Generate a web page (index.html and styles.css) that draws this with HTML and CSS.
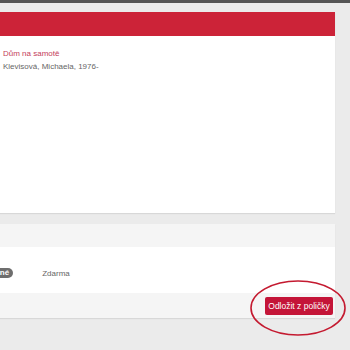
FILE: index.html
```html
<!DOCTYPE html>
<html lang="cs">
<head>
<meta charset="UTF-8"/>
<title>Moje police</title>
<link rel="stylesheet" href="styles.css">
</head>
<body>
<div class="topbar"></div>
<div class="page">
  <section class="panel">
    <div class="panel-head"></div>
    <div class="panel-body">
      <a class="book-title" href="#">Dům na samotě</a>
      <div class="book-author">Klevisová, Michaela, 1976-</div>
    </div>
  </section>

  <section class="panel loan">
    <div class="loan-head"></div>
    <div class="loan-row">
      <span class="badge">Volné</span>
      <span class="price">Zdarma</span>
    </div>
    <div class="loan-foot">
      <button class="btn-remove">Odložit z poličky</button>
      <svg class="circle" width="100" height="60" viewBox="0 0 100 60" aria-hidden="true">
        <ellipse cx="50" cy="30" rx="47" ry="27" fill="none" stroke="#c41a30" stroke-width="1.6"/>
      </svg>
    </div>
  </section>
</div>
</body>
</html>
```

FILE: styles.css
```css
* {
  box-sizing: border-box;
}
html, body {
  margin: 0;
  padding: 0;
  height: 100%;
  overflow: hidden;
  background: #ebebeb;
  font-family: 'Liberation Sans', Arial, sans-serif;
  font-size: 8px;
}
.topbar {
  height: 3px;
  background: #555;
}
.page {
  width: 335px;
  padding-top: 9px;
}
.panel {
  background: #fff;
  box-shadow: 0 1px 1px rgba(0, 0, 0, 0.08);
}
.panel-head {
  height: 24px;
  background: #cc2338;
}
.panel-body {
  height: 177px;
  padding: 11px 3px;
  line-height: 13px;
}
.book-title {
  color: #c4405a;
  text-decoration: none;
}
.book-author {
  color: #666;
}
.loan {
  margin-top: 11px;
}
.loan-head {
  height: 23px;
  background: #f5f5f5;
}
.loan-row {
  height: 46px;
  display: flex;
  align-items: center;
  gap: 29px;
  margin-left: -16px;
  padding-top: 6px;
}
.badge {
  background: #6e6e6e;
  color: #fff;
  font-size: 8px;
  font-weight: bold;
  border-radius: 5px;
  padding: 0 4px;
  line-height: 10px;
}
.price {
  color: #666;
}
.loan-foot {
  height: 25px;
  background: #f5f5f5;
  display: flex;
  justify-content: flex-end;
  align-items: center;
  padding-right: 2px;
  position: relative;
}
.btn-remove {
  background: #c41538;
  color: #fff;
  border: none;
  border-radius: 2px;
  font-family: inherit;
  font-size: 8.5px;
  width: 68px;
  height: 18px;
  padding: 0;
  cursor: pointer;
}
.circle {
  position: absolute;
  left: 248px;
  top: -15px;
  pointer-events: none;
}
```
